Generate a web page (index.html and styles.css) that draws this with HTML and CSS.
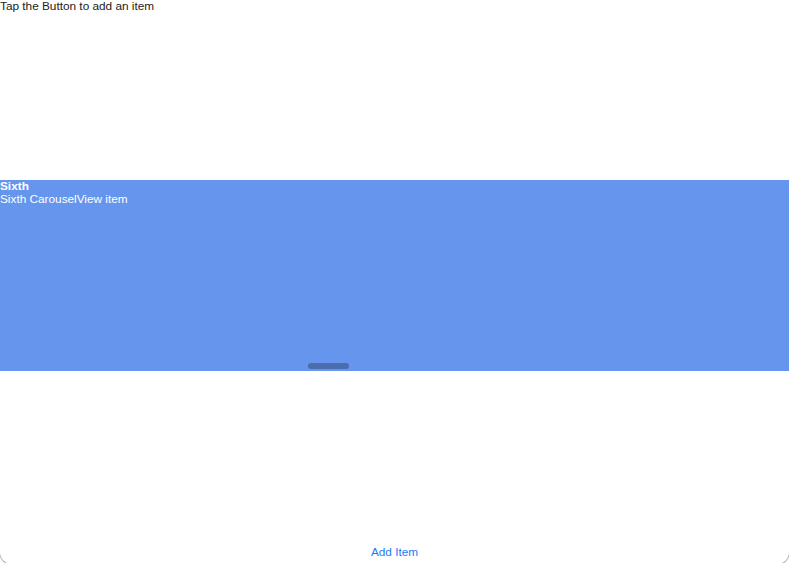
FILE: index.html
```html
<!DOCTYPE html>
<html>
<head>
<meta charset="utf-8">
<link rel="stylesheet" href="styles.css">
</head>
<body>
<div class="window">
  <div class="header">Tap the Button to add an item</div>
  <div class="spacer-top"></div>
  <div class="carousel">
    <div class="item">
      <div class="item-title">Sixth</div>
      <div class="item-desc">Sixth CarouselView item</div>
    </div>
    <div class="indicator"></div>
  </div>
  <div class="spacer-bottom"></div>
  <div class="footer">
    <button class="add-btn">Add Item</button>
  </div>
</div>
</body>
</html>
```
FILE: styles.css
```css
html, body {
  margin: 0;
  padding: 0;
  background: #ffffff;
  overflow: hidden;
  height: 563px;
}
body {
  font-family: "Liberation Sans", Arial, sans-serif;
  font-size: 11.8px;
  color: #1d1d1f;
}
.window {
  width: 789px;
  height: 564px;
  display: flex;
  flex-direction: column;
  border-radius: 0 0 12px 12px;
  box-shadow: 0 0 0 1px #b0b0b0;
  overflow: hidden;
  position: relative;
  background: #ffffff;
}
.header {
  height: 14px;
  line-height: 13px;
  color: #222;
}
.spacer-top {
  height: 166px;
}
.carousel {
  height: 191px;
  background: #6595ed;
  position: relative;
}
.item {
  color: #ffffff;
  display: flex;
  flex-direction: column;
}
.item-title {
  font-weight: 700;
  line-height: 13px;
}
.item-desc {
  line-height: 13px;
}
.indicator {
  position: absolute;
  left: 308px;
  top: 183px;
  width: 41px;
  height: 6px;
  border-radius: 3px;
  background: #4b6cad;
}
.spacer-bottom {
  flex: 1;
}
.footer {
  height: 19px;
  display: flex;
  justify-content: center;
  align-items: flex-start;
}
.add-btn {
  font: inherit;
  background: none;
  border: none;
  padding: 0;
  color: #1a7cf5;
  cursor: pointer;
  line-height: 14px;
}
```
